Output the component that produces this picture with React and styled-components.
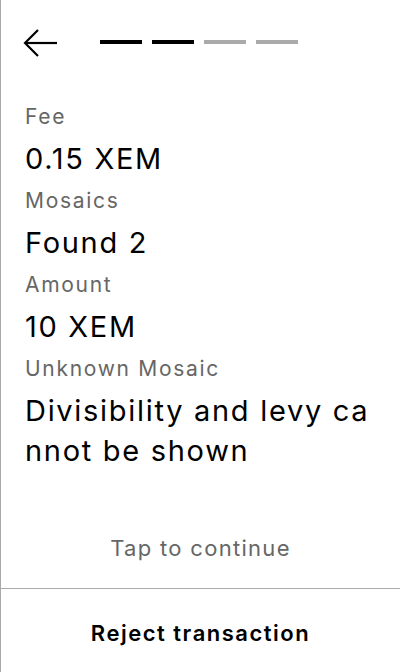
import React from "react";
import styled, { createGlobalStyle } from "styled-components";

const Global = createGlobalStyle`
  html, body { margin: 0; padding: 0; background: #fff; }
  body { font-family: Inter, "Noto Sans", sans-serif; -webkit-font-smoothing: antialiased; }
  * { box-sizing: border-box; }
`;

const Screen = styled.div`
  width: 400px;
  height: 672px;
  border-left: 1px solid #a9a9a9;
  display: flex;
  flex-direction: column;
  background: #fff;
  color: #000;
  overflow: hidden;
`;

const Header = styled.div`
  display: flex;
  align-items: center;
  padding: 29px 0 0 22px;
  height: 57px;
`;

const BackButton = styled.button`
  border: 0;
  background: none;
  padding: 0;
  width: 34px;
  height: 28px;
  display: flex;
  cursor: pointer;
`;

const Steps = styled.div`
  display: flex;
  gap: 10px;
  margin-left: 43px;
  margin-top: -3px;
`;

const Step = styled.div`
  width: 42px;
  height: 4px;
  background: ${(p) => (p.$done ? "#000" : "#aaaaaa")};
`;

const Content = styled.div`
  flex: 1;
  display: flex;
  flex-direction: column;
  gap: 8px;
  padding: 46px 22px 0 24px;
`;

const Label = styled.div`
  font-size: 21px;
  line-height: 28px;
  letter-spacing: 1.7px;
  color: #666;
`;

const Value = styled.div`
  font-size: 29px;
  line-height: 40px;
  letter-spacing: 1.7px;
  color: #000;
  word-break: break-all;
`;

const Hint = styled.div`
  text-align: center;
  font-size: 22px;
  line-height: 32px;
  letter-spacing: 1.3px;
  color: #666;
  padding-bottom: 24px;
`;

const Divider = styled.div`
  height: 1px;
  background: #aaaaaa;
`;

const RejectButton = styled.button`
  border: 0;
  background: none;
  font-family: Inter, "Noto Sans", sans-serif;
  font-size: 22px;
  font-weight: 600;
  line-height: 32px;
  letter-spacing: 1.5px;
  color: #000;
  padding: 28px 0 23px;
  text-align: center;
  cursor: pointer;
`;

const fields = [
  ["Fee", "0.15 XEM"],
  ["Mosaics", "Found 2"],
  ["Amount", "10 XEM"],
  ["Unknown Mosaic", "Divisibility and levy cannot be shown"],
];

export default function App() {
  return (
    <>
      <Global />
      <Screen>
        <Header>
          <BackButton aria-label="Back">
            <svg width="34" height="28" viewBox="0 0 34 28" fill="none">
              <path d="M2 14 H34" stroke="#000" strokeWidth="2.2" />
              <path d="M15 1 L2 14 L15 27" stroke="#000" strokeWidth="2.2" />
            </svg>
          </BackButton>
          <Steps>
            <Step $done />
            <Step $done />
            <Step />
            <Step />
          </Steps>
        </Header>
        <Content>
          {fields.map(([l, v]) => (
            <React.Fragment key={l}>
              <Label>{l}</Label>
              <Value>{v}</Value>
            </React.Fragment>
          ))}
        </Content>
        <Hint>Tap to continue</Hint>
        <Divider />
        <RejectButton>Reject transaction</RejectButton>
      </Screen>
    </>
  );
}
